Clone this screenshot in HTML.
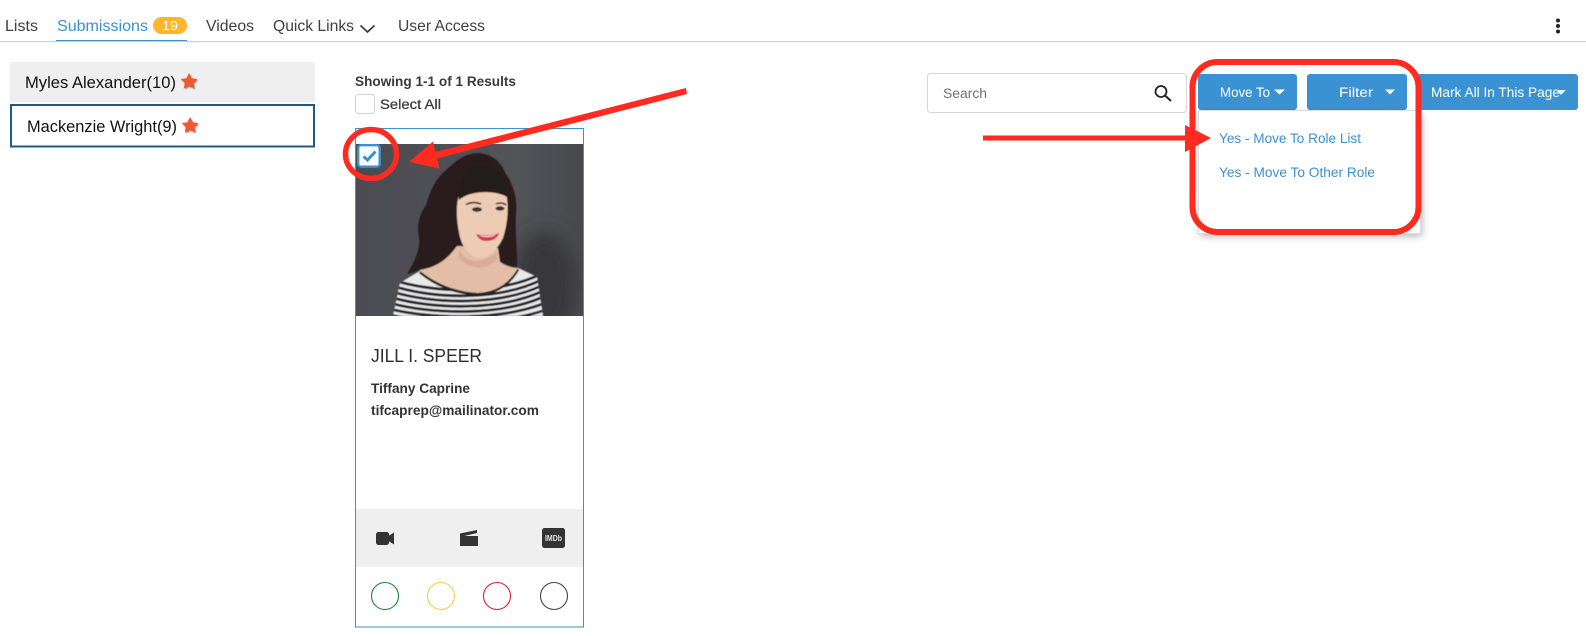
<!DOCTYPE html>
<html><head><meta charset="utf-8"><title>Submissions</title>
<style>
html,body{margin:0;padding:0;background:#fff;width:1586px;height:636px;overflow:hidden}
svg{display:block}
text{font-family:"Liberation Sans",sans-serif}
</style></head>
<body>
<svg width="1586" height="636" viewBox="0 0 1586 636" xmlns="http://www.w3.org/2000/svg">
<defs>
<clipPath id="ph"><rect x="356" y="144" width="227" height="172"/></clipPath>
<linearGradient id="bg" x1="0" x2="1" y1="0" y2="0"><stop offset="0" stop-color="#4b4c51"/><stop offset=".7" stop-color="#525358"/><stop offset="1" stop-color="#48494d"/></linearGradient>
<filter id="sh" x="-10%" y="-10%" width="120%" height="120%"><feGaussianBlur stdDeviation="4"/></filter>
<filter id="b1" x="-5%" y="-5%" width="110%" height="110%"><feGaussianBlur stdDeviation="0.6"/></filter>
<filter id="b2" x="-30%" y="-30%" width="160%" height="160%"><feGaussianBlur stdDeviation="0.8"/></filter>
<filter id="b3" x="-50%" y="-50%" width="200%" height="200%"><feGaussianBlur stdDeviation="9"/></filter>
<clipPath id="shirt"><path d="M393 316L400 283L420 271C436 284 456 292 478 293C498 292 510 282 518 268L537 277L543 316Z"/></clipPath>
</defs>

<!-- nav -->
<text x="5" y="31" font-size="16" fill="#3f3f3f" textLength="33" lengthAdjust="spacingAndGlyphs">Lists</text>
<text x="57" y="31" font-size="16" fill="#3a92d2" textLength="91" lengthAdjust="spacingAndGlyphs">Submissions</text>
<rect x="153" y="17" width="34" height="17" rx="8.5" fill="#ffb52e"/>
<text x="162" y="30" font-size="13" fill="#fff" textLength="16" lengthAdjust="spacingAndGlyphs">19</text>
<rect x="56" y="40" width="131" height="1" fill="#3a92d2"/>
<text x="206" y="31" font-size="16" fill="#3f3f3f" textLength="48" lengthAdjust="spacingAndGlyphs">Videos</text>
<text x="273" y="31" font-size="16" fill="#3f3f3f" textLength="81" lengthAdjust="spacingAndGlyphs">Quick Links</text>
<path d="M360.5 25.5L367.5 32L374.5 25.5" fill="none" stroke="#333" stroke-width="1.6"/>
<text x="398" y="31" font-size="16" fill="#3f3f3f" textLength="87" lengthAdjust="spacingAndGlyphs">User Access</text>
<rect x="0" y="41" width="1586" height="1.2" fill="#cfcfcf"/>
<circle cx="1558" cy="20.5" r="2" fill="#222"/><circle cx="1558" cy="26" r="2" fill="#222"/><circle cx="1558" cy="31.5" r="2" fill="#222"/>

<!-- left list -->
<rect x="10" y="62" width="305" height="40" fill="#efefef"/>
<text x="25" y="88" font-size="16.5" fill="#111" textLength="151" lengthAdjust="spacingAndGlyphs">Myles Alexander(10)</text>
<path d="M189 73L191.6 78.2L197.3 79L193.3 83L194.2 88.5L189 86L183.800 88.500L184.700 83L180.700 79L186.400 78.200Z" transform="translate(1 1)" fill="#888" filter="url(#b2)"/>
<path d="M189 73L191.6 78.2L197.3 79L193.3 83L194.2 88.5L189 86L183.800 88.500L184.700 83L180.700 79L186.400 78.200Z" fill="#f05a2c"/>
<rect x="11" y="105" width="303" height="41.5" fill="#fff" stroke="#1f5a85" stroke-width="2"/>
<text x="27" y="132" font-size="16.5" fill="#111" textLength="150" lengthAdjust="spacingAndGlyphs">Mackenzie Wright(9)</text>
<path d="M189 73L191.6 78.2L197.3 79L193.3 83L194.2 88.5L189 86L183.800 88.500L184.700 83L180.700 79L186.400 78.200Z" transform="translate(2 45)" fill="#888" filter="url(#b2)"/>
<path d="M189 73L191.6 78.2L197.3 79L193.3 83L194.2 88.5L189 86L183.800 88.500L184.700 83L180.700 79L186.400 78.200Z" transform="translate(1 44)" fill="#f05a2c"/>

<!-- results -->
<text x="355" y="86" font-size="13.5" font-weight="bold" fill="#3a3a3a" textLength="161" lengthAdjust="spacingAndGlyphs">Showing 1-1 of 1 Results</text>
<rect x="355.5" y="94.5" width="19" height="19" rx="3" fill="#fff" stroke="#d0d0d0"/>
<text x="380" y="109" font-size="13.5" fill="#3a3a3a" stroke="#3a3a3a" stroke-width=".25" textLength="61" lengthAdjust="spacingAndGlyphs">Select All</text>

<!-- card -->
<rect x="355.5" y="128.5" width="228" height="498.5" fill="#fff" stroke="#3a92d2" stroke-width="1"/>
<g clip-path="url(#ph)">
<g filter="url(#b1)">
<rect x="350" y="140" width="240" height="180" fill="url(#bg)"/>
<ellipse cx="545" cy="285" rx="32" ry="55" fill="#37383b" filter="url(#b3)"/>
<!-- hair -->
<path d="M477 153C490 153 500 160 505 172C514 185 518 200 516 215C515 235 518 250 517 267C508 267 500 262 495 258L460 245C458 250 448 262 440 266C430 268 424 268 420 270C414 272 410 274 407 274C414 262 420 250 419 238C416 226 419 214 426 205C430 190 436 178 446 170C456 160 466 153 477 153Z" fill="#2a1f1f"/>
<!-- skin neck chest -->
<path d="M420 270C432 268 445 263 457 246L498 248L500 262C506 266 512 268 518 268C510 282 498 292 478 293C456 292 436 284 420 271Z" fill="#e3bda5"/>
<path d="M459 250C466 262 480 266 497 252L497 260C486 270 470 270 459 258Z" fill="#cfa088" opacity=".55"/>
<!-- face -->
<path d="M460 192C472 188 497 188 506 193C509 206 508 222 503 238C497 251 487 258 479 258C469 257 461 246 459 232C456 218 456 202 460 192Z" fill="#eecbb5"/>
<path d="M459 200C470 190 496 190 507 197L507 182C502 170 490 162 476 166C464 170 457 186 459 200Z" fill="#241a1a"/>
<path d="M466 204.500C471 202 476 202 481 204M496 204C499 202.500 503 202.500 506 205" stroke="#2a1e1e" stroke-width="1.5" fill="none"/>
<ellipse cx="477" cy="209.500" rx="5" ry="2.300" fill="#3b3029"/>
<ellipse cx="500" cy="208.500" rx="4.500" ry="2.200" fill="#3b3029"/>
<path d="M476 234C484 236 492 236 499 233C497 240 490 241 486 241C481 241 478 238 476 234Z" fill="#cf3b4a"/>
<path d="M479 235C485 237 491 236 496 234.500C493 237.500 483 238.500 479 235Z" fill="#f5e8e2"/>
<!-- shirt -->
<g clip-path="url(#shirt)">
<rect x="390" y="260" width="160" height="60" fill="#e9e9e9"/>
<g stroke="#242428" stroke-width="2.800" fill="none">
<path d="M390 279C430 293 500 296 545 272"/><path d="M390 285C430 299 500 302 545 278"/><path d="M390 291C430 304 500 307 545 284"/><path d="M390 297C430 309 500 312 545 290"/><path d="M390 303C430 314 500 317 545 296"/><path d="M390 309C430 319 500 321 545 303"/><path d="M390 315C430 324 500 326 545 310"/>
<path d="M420 272C436 285 456 293 478 294C498 293 510 283 518 269" stroke-width="3.200"/>
</g>
</g>
</g>
</g>
<!-- photo checkbox -->
<rect x="358.200" y="145.200" width="21.500" height="21.500" rx="3" fill="#fff" stroke="#3a92d2" stroke-width="2.400"/>
<path d="M363.500 156.500L367.500 160L375.500 151.500" fill="none" stroke="#3a92d2" stroke-width="3"/>

<text x="371" y="362" font-size="18" fill="#2f2f2f" textLength="111" lengthAdjust="spacingAndGlyphs">JILL I. SPEER</text>
<text x="371" y="393" font-size="13.500" font-weight="bold" fill="#333" textLength="99" lengthAdjust="spacingAndGlyphs">Tiffany Caprine</text>
<text x="371" y="415" font-size="13.500" font-weight="bold" fill="#333" textLength="168" lengthAdjust="spacingAndGlyphs">tifcaprep@mailinator.com</text>

<rect x="356" y="509" width="227" height="58" fill="#efefef"/>
<!-- camera -->
<rect x="376" y="532" width="13" height="13" rx="2.500" fill="#333"/>
<path d="M388.500 536L394 532.500V544.500L388.500 541Z" fill="#333"/>
<!-- clapper -->
<path d="M460 533.500L477 530V533L460 537Z" fill="#333"/>
<rect x="460" y="536" width="18" height="10" fill="#333"/>
<!-- imdb -->
<rect x="542" y="528" width="23" height="20" rx="2.500" fill="#333"/>
<text x="545" y="541" font-size="8" font-weight="bold" fill="#e4e4e4" textLength="17" lengthAdjust="spacingAndGlyphs">IMDb</text>

<circle cx="385" cy="596" r="13.500" fill="none" stroke="#1e8a3c" stroke-width="1.100"/>
<circle cx="441" cy="596" r="13.500" fill="none" stroke="#ffcf40" stroke-width="1.100"/>
<circle cx="497" cy="596" r="13.500" fill="none" stroke="#e0203c" stroke-width="1.100"/>
<circle cx="554" cy="596" r="13.500" fill="none" stroke="#444" stroke-width="1.100"/>

<!-- search -->
<rect x="927.500" y="73.500" width="259" height="39" rx="3" fill="#fff" stroke="#d6d6d6"/>
<text x="943" y="98" font-size="14" fill="#6f6f6f" textLength="44" lengthAdjust="spacingAndGlyphs">Search</text>
<circle cx="1161" cy="91.500" r="5.500" fill="none" stroke="#222" stroke-width="1.800"/>
<path d="M1165 95.500L1171 101" stroke="#222" stroke-width="2"/>

<!-- buttons -->
<rect x="1416" y="74" width="162" height="36" rx="3" fill="#3a92d2"/>
<rect x="1198" y="74" width="99" height="36" rx="3" fill="#3a92d2"/>
<rect x="1307" y="74" width="100" height="36" rx="3" fill="#3a92d2"/>
<text x="1220" y="97" font-size="14" fill="#fff" textLength="50" lengthAdjust="spacingAndGlyphs">Move To</text>
<path d="M1274 89.500H1285L1279.500 94.500Z" fill="#fff"/>
<text x="1339" y="97" font-size="14" fill="#fff" textLength="34" lengthAdjust="spacingAndGlyphs">Filter</text>
<path d="M1385 89.500H1395L1390 94.500Z" fill="#fff"/>
<text x="1431" y="97" font-size="14" fill="#fff" textLength="129" lengthAdjust="spacingAndGlyphs">Mark All In This Page</text>
<path d="M1556 90H1566L1561 95Z" fill="#fff" opacity=".9"/>

<!-- dropdown -->
<rect x="1200" y="114" width="222" height="122" fill="#000" opacity=".3" filter="url(#sh)"/>
<rect x="1198.500" y="110.500" width="222" height="123" fill="#fff" stroke="#dcdcdc"/>
<text x="1219" y="143" font-size="14" fill="#3a92d2" textLength="142" lengthAdjust="spacingAndGlyphs">Yes - Move To Role List</text>
<text x="1219" y="177" font-size="14" fill="#3a92d2" textLength="156" lengthAdjust="spacingAndGlyphs">Yes - Move To Other Role</text>

<!-- annotations -->
<rect x="1192.500" y="62" width="226" height="170" rx="25" fill="none" stroke="#ff2a20" stroke-width="6"/>
<path d="M983 135.500H1185V125L1211 138L1185 152V140.500H983Z" fill="#ff2a20"/>
<ellipse cx="371" cy="154" rx="25.500" ry="24.500" fill="none" stroke="#ff2a20" stroke-width="5.500"/>
<path d="M686 88L687 94L437 158.500L439.500 168.500L409 162L433 141.500L435.500 152Z" fill="#ff2a20"/>
</svg>
</body></html>
